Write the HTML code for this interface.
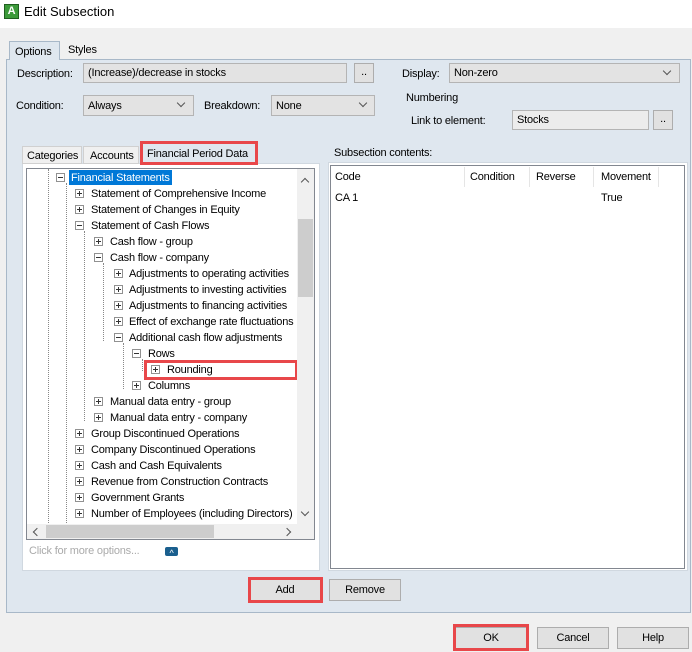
<!DOCTYPE html>
<html><head><meta charset="utf-8"><style>
*{margin:0;padding:0;box-sizing:border-box}
body{width:692px;height:652px;background:#f0f0f0;font-family:"Liberation Sans",sans-serif;font-size:11px;letter-spacing:-0.2px;color:#000;position:relative;overflow:hidden}
.a{position:absolute}
.t{position:absolute;white-space:nowrap;line-height:14px}
.in{position:absolute;background:#e3e3e3;border:1px solid #b4b4b4;padding-left:4px;line-height:19px}
.btn{position:absolute;background:#e1e1e1;border:1px solid #adadad;text-align:center;line-height:20px}
.red{position:absolute;border:3px solid #e8474a}
.bx{position:absolute;width:9px;height:9px;border:1px solid #919191;background:#fff}
.bx:before{content:"";position:absolute;left:1px;top:3px;width:5px;height:1px;background:#333}
.bx.p:after{content:"";position:absolute;left:3px;top:1px;width:1px;height:5px;background:#333}
.dl{position:absolute;border-left:1px dotted #888}
.chev{position:absolute;width:6px;height:6px;border-right:1px solid #555;border-bottom:1px solid #555;transform:rotate(45deg)}
</style></head><body>
<div class="a" style="left:0;top:0;width:692px;height:28px;background:#fff"></div>
<div class="a" style="left:4px;top:4px;width:15px;height:15px;background:#3c9a3a;border:1px solid #1f5f1f;color:#fff;font-size:11px;font-weight:bold;line-height:13px;text-align:center">A</div>
<div class="t" style="left:24px;top:5px;font-size:13px;letter-spacing:0">Edit Subsection</div>

<div class="a" style="left:6px;top:59px;width:685px;height:554px;background:#dfe7ef;border:1px solid #a8b8c8"></div>
<div class="a" style="left:9px;top:41px;width:51px;height:19px;background:#dfe7ef;border:1px solid #a8b8c8;border-bottom:none"></div>
<div class="t" style="left:15px;top:45px">Options</div>
<div class="t" style="left:68px;top:43px">Styles</div>

<div class="t" style="left:17px;top:67px">Description:</div>
<div class="in" style="left:83px;top:63px;width:264px;height:20px">(Increase)/decrease in stocks</div>
<div class="btn" style="left:354px;top:63px;width:20px;height:20px;line-height:16px">..</div>
<div class="t" style="left:402px;top:67px">Display:</div>
<div class="in" style="left:449px;top:63px;width:231px;height:20px">Non-zero</div>
<div class="chev" style="left:664px;top:68px"></div>

<div class="t" style="left:16px;top:99px">Condition:</div>
<div class="in" style="left:83px;top:95px;width:111px;height:21px;line-height:20px">Always</div>
<div class="chev" style="left:178px;top:100px"></div>
<div class="t" style="left:204px;top:99px">Breakdown:</div>
<div class="in" style="left:271px;top:95px;width:104px;height:21px;line-height:20px">None</div>
<div class="chev" style="left:360px;top:100px"></div>
<div class="t" style="left:406px;top:91px">Numbering</div>
<div class="t" style="left:411px;top:114px">Link to element:</div>
<div class="in" style="left:512px;top:110px;width:137px;height:20px;background:#ececec">Stocks</div>
<div class="btn" style="left:653px;top:110px;width:20px;height:20px;line-height:16px">..</div>

<div class="a" style="left:22px;top:163px;width:298px;height:408px;background:#fff;border:1px solid #d0d8e0"></div>
<div class="a" style="left:22px;top:146px;width:60px;height:18px;background:#f0f0f0;border:1px solid #d0d0d0"></div>
<div class="t" style="left:27px;top:149px">Categories</div>
<div class="a" style="left:83px;top:146px;width:56px;height:18px;background:#f0f0f0;border:1px solid #d0d0d0"></div>
<div class="t" style="left:90px;top:149px">Accounts</div>
<div class="t" style="left:147px;top:147px">Financial Period Data</div>
<div class="red" style="left:140px;top:141px;width:118px;height:24px"></div>

<div class="a" style="left:26px;top:168px;width:289px;height:372px;border:1px solid #828790;background:#fff;overflow:hidden">
<div class="dl" style="left:21px;top:0;height:372px"></div>
<div class="dl" style="left:39px;top:14px;height:358px"></div>
<div class="dl" style="left:57px;top:62px;height:190px"></div>
<div class="dl" style="left:76px;top:94px;height:78px"></div>
<div class="dl" style="left:96px;top:174px;height:46px"></div>
<div class="dl" style="left:115px;top:190px;height:12px"></div>
</div>
<div class="a" style="left:69px;top:170px;width:103px;height:15px;background:#0078d7"></div>
<div class="t" style="left:71px;top:171px;color:#fff">Financial Statements</div>

<div class="bx" style="left:56px;top:173px"></div>
<div class="bx p" style="left:75px;top:189px"></div><div class="t" style="left:91px;top:187px">Statement of Comprehensive Income</div>
<div class="bx p" style="left:75px;top:205px"></div><div class="t" style="left:91px;top:203px">Statement of Changes in Equity</div>
<div class="bx" style="left:75px;top:221px"></div><div class="t" style="left:91px;top:219px">Statement of Cash Flows</div>
<div class="bx p" style="left:94px;top:237px"></div><div class="t" style="left:110px;top:235px">Cash flow - group</div>
<div class="bx" style="left:94px;top:253px"></div><div class="t" style="left:110px;top:251px">Cash flow - company</div>
<div class="bx p" style="left:114px;top:269px"></div><div class="t" style="left:129px;top:267px">Adjustments to operating activities</div>
<div class="bx p" style="left:114px;top:285px"></div><div class="t" style="left:129px;top:283px">Adjustments to investing activities</div>
<div class="bx p" style="left:114px;top:301px"></div><div class="t" style="left:129px;top:299px">Adjustments to financing activities</div>
<div class="bx p" style="left:114px;top:317px"></div><div class="t" style="left:129px;top:315px">Effect of exchange rate fluctuations</div>
<div class="bx" style="left:114px;top:333px"></div><div class="t" style="left:129px;top:331px">Additional cash flow adjustments</div>
<div class="bx" style="left:132px;top:349px"></div><div class="t" style="left:148px;top:347px">Rows</div>
<div class="bx p" style="left:151px;top:365px"></div><div class="t" style="left:167px;top:363px">Rounding</div>
<div class="red" style="left:144px;top:360px;width:154px;height:20px"></div>
<div class="bx p" style="left:132px;top:381px"></div><div class="t" style="left:148px;top:379px">Columns</div>
<div class="bx p" style="left:94px;top:397px"></div><div class="t" style="left:110px;top:395px">Manual data entry - group</div>
<div class="bx p" style="left:94px;top:413px"></div><div class="t" style="left:110px;top:411px">Manual data entry - company</div>
<div class="bx p" style="left:75px;top:429px"></div><div class="t" style="left:91px;top:427px">Group Discontinued Operations</div>
<div class="bx p" style="left:75px;top:445px"></div><div class="t" style="left:91px;top:443px">Company Discontinued Operations</div>
<div class="bx p" style="left:75px;top:461px"></div><div class="t" style="left:91px;top:459px">Cash and Cash Equivalents</div>
<div class="bx p" style="left:75px;top:477px"></div><div class="t" style="left:91px;top:475px">Revenue from Construction Contracts</div>
<div class="bx p" style="left:75px;top:493px"></div><div class="t" style="left:91px;top:491px">Government Grants</div>
<div class="bx p" style="left:75px;top:509px"></div><div class="t" style="left:91px;top:507px">Number of Employees (including Directors)</div>

<div class="a" style="left:297px;top:169px;width:17px;height:355px;background:#f0f0f0"></div>
<div class="a" style="left:298px;top:219px;width:15px;height:78px;background:#cdcdcd"></div>
<div class="chev" style="left:302px;top:179px;transform:rotate(225deg)"></div>
<div class="chev" style="left:302px;top:509px"></div>
<div class="a" style="left:27px;top:524px;width:287px;height:15px;background:#f0f0f0"></div>
<div class="a" style="left:46px;top:525px;width:168px;height:13px;background:#cdcdcd"></div>
<div class="chev" style="left:34px;top:529px;transform:rotate(135deg)"></div>
<div class="chev" style="left:284px;top:529px;transform:rotate(-45deg)"></div>
<div class="t" style="left:29px;top:544px;color:#aaa">Click for more options...</div>
<div class="a" style="left:165px;top:547px;width:13px;height:9px;background:#1a5f8e;border-radius:2px;color:#fff;font-size:9px;line-height:12px;text-align:center">^</div>

<div class="t" style="left:334px;top:146px">Subsection contents:</div>
<div class="a" style="left:328px;top:162px;width:360px;height:409px;background:#fff;border:1px solid #d0d8e0"></div>
<div class="a" style="left:330px;top:165px;width:355px;height:404px;border:1px solid #828790;background:#fff"></div>
<div class="a" style="left:464px;top:167px;width:1px;height:20px;background:#e5e5e5"></div>
<div class="a" style="left:529px;top:167px;width:1px;height:20px;background:#e5e5e5"></div>
<div class="a" style="left:593px;top:167px;width:1px;height:20px;background:#e5e5e5"></div>
<div class="a" style="left:658px;top:167px;width:1px;height:20px;background:#e5e5e5"></div>
<div class="t" style="left:335px;top:170px">Code</div>
<div class="t" style="left:470px;top:170px">Condition</div>
<div class="t" style="left:536px;top:170px">Reverse</div>
<div class="t" style="left:601px;top:170px">Movement</div>
<div class="t" style="left:335px;top:191px">CA 1</div>
<div class="t" style="left:601px;top:191px">True</div>

<div class="btn" style="left:249px;top:579px;width:72px;height:22px">Add</div>
<div class="red" style="left:248px;top:577px;width:75px;height:26px"></div>
<div class="btn" style="left:329px;top:579px;width:72px;height:22px">Remove</div>

<div class="btn" style="left:455px;top:627px;width:72px;height:22px">OK</div>
<div class="red" style="left:453px;top:624px;width:76px;height:27px"></div>
<div class="btn" style="left:537px;top:627px;width:72px;height:22px">Cancel</div>
<div class="btn" style="left:617px;top:627px;width:72px;height:22px">Help</div>
</body></html>
